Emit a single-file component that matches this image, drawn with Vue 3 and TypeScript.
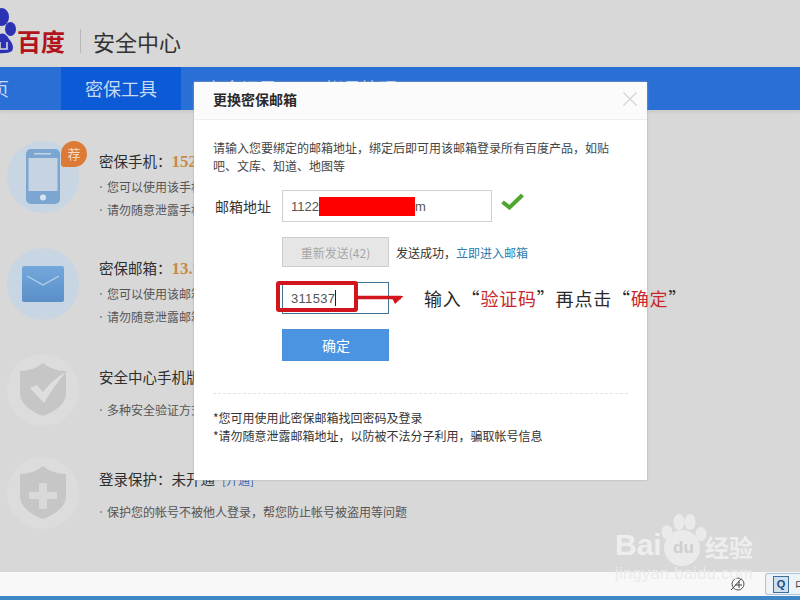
<script setup lang="ts">
// Rows on the security page, the modal lies over most of their text
interface SecurityRow {
  kind: 'phone' | 'mail' | 'check' | 'plus';
  title: string;
  value?: string;
  link?: string;
  lines: string[];
}

const rows: SecurityRow[] = [
  {
    kind: 'phone',
    title: '密保手机：',
    value: '152****8866',
    lines: ['您可以使用该手机号码登录所有百度产品', '请勿随意泄露手机号码，以防被不法分子利用'],
  },
  {
    kind: 'mail',
    title: '密保邮箱：',
    value: '13.****@qq.com',
    lines: ['您可以使用该邮箱找回密码及登录', '请勿随意泄露邮箱地址，以防被不法分子利用'],
  },
  {
    kind: 'check',
    title: '安全中心手机版',
    lines: ['多种安全验证方式，保护您的帐号安全'],
  },
  {
    kind: 'plus',
    title: '登录保护：未开通',
    link: '[开通]',
    lines: ['保护您的帐号不被他人登录，帮您防止帐号被盗用等问题'],
  },
];

const tabs: string[] = ['首页', '密保工具', '安全记录', '帐号管理'];
</script>

<template>
  <div class="page">
    <header class="top">
      <svg class="paw" width="16" height="56" viewBox="0 0 16 56">
        <ellipse cx="2" cy="17" rx="7" ry="9" fill="#2b33b4" />
        <ellipse cx="10.5" cy="29" rx="5.5" ry="7" fill="#2b33b4" />
        <path d="M-4 36 Q4 30 9 39 Q15 46 12 51 Q8 54 -4 53 Z" fill="#2b33b4" />
        <path d="M0 42 V49 H7 V42" fill="none" stroke="#d8d8d8" stroke-width="1.6" />
      </svg>
      <span class="brand">百度</span>
      <span class="brand-sep"></span>
      <span class="brand-sub">安全中心</span>
    </header>

    <nav class="nav">
      <a v-for="(tab, i) in tabs" :key="tab" class="nav-tab" :class="{ active: i === 1 }">{{ tab }}</a>
    </nav>

    <main class="list">
      <section v-for="row in rows" :key="row.kind" class="row" :class="{ single: row.lines.length === 1 }">
        <div class="icon-disc" :class="{ blue: row.kind === 'phone' || row.kind === 'mail' }">
          <svg v-if="row.kind === 'phone'" width="36" height="56" viewBox="0 0 36 56">
            <rect x="1" y="0" width="34" height="55" rx="5" fill="#7ba6d1" />
            <rect x="3.5" y="9" width="29" height="33" fill="#c6d3e2" />
            <rect x="9" y="4" width="17" height="1.5" fill="#c6d3e2" />
            <circle cx="18" cy="48.5" r="3" fill="#dbe5ef" />
          </svg>
          <svg v-else-if="row.kind === 'mail'" width="42" height="36" viewBox="0 0 42 36">
            <defs>
              <linearGradient id="mailFill" x1="0" y1="0" x2="0" y2="1">
                <stop offset="0" stop-color="#74a8dc" />
                <stop offset="1" stop-color="#5a8fc8" />
              </linearGradient>
            </defs>
            <rect width="42" height="36" rx="2" fill="url(#mailFill)" />
            <path d="M5 10 L21 19 L37 10" fill="none" stroke="#b4d0ea" stroke-width="1.4" />
          </svg>
          <svg v-else width="48" height="54" viewBox="0 0 48 54">
            <path d="M24 0 Q34 8 47 8 V32 Q45 45 24 53 Q3 45 1 32 V8 Q14 8 24 0 Z" fill="#c6c6c6" />
            <path v-if="row.kind === 'check'" d="M11 25 L18 22 L24 29 Q34 16 47 9 Q34 24 25 40 Z" fill="#dedede" />
            <path v-else d="M20 17 H28 V26 H38 V33 H28 V43 H20 V33 H10 V26 H20 Z" fill="#d9d9d9" />
          </svg>
          <span v-if="row.kind === 'phone'" class="badge">荐</span>
        </div>
        <div class="row-text">
          <div class="row-title">
            {{ row.title }}<b v-if="row.value" class="row-value">{{ row.value }}</b>
            <a v-if="row.link" class="row-link">{{ row.link }}</a>
          </div>
          <p v-for="line in row.lines" :key="line" class="row-line"><i></i>{{ line }}</p>
        </div>
      </section>
    </main>

    <footer class="status">
      <svg class="status-icon" width="16" height="16" viewBox="0 0 16 16">
        <circle cx="8" cy="8" r="6" fill="none" stroke="#555" stroke-width="1" />
        <path d="M1 14 L12 2 M5 9 H12 M9 5 V12" fill="none" stroke="#444" stroke-width="1" />
      </svg>
      <div class="status-btn">
        <span class="status-q">Q</span>
        <span>中</span>
      </div>
    </footer>
    <div class="taskbar"></div>

    <div class="modal">
      <div class="modal-head">
        <span class="modal-title">更换密保邮箱</span>
        <svg class="modal-close" width="14" height="14" viewBox="0 0 14 14">
          <path d="M0.5 0.5 L13.5 13.5 M13.5 0.5 L0.5 13.5" stroke="#d4d4d4" stroke-width="1.2" />
        </svg>
      </div>
      <div class="modal-body">
        <p class="modal-desc">请输入您要绑定的邮箱地址，绑定后即可用该邮箱登录所有百度产品，如贴吧、文库、知道、地图等</p>
        <div class="form-row first">
          <label class="form-label">邮箱地址</label>
          <div class="field wide">1122<span class="redact"></span>m</div>
          <svg class="ok" width="23" height="17" viewBox="0 0 23 17">
            <path d="M1.5 9 L8.5 14.5 L21.5 2" fill="none" stroke="#4fa52f" stroke-width="4" />
          </svg>
        </div>
        <div class="form-row resend-row">
          <button class="resend" disabled>重新发送(42)</button>
          <span class="sent">发送成功，<a class="sent-link">立即进入邮箱</a></span>
        </div>
        <div class="form-row code-row">
          <div class="field code">311537<span class="caret"></span></div>
        </div>
        <div class="form-row confirm-row">
          <button class="confirm">确定</button>
        </div>
        <div class="modal-notes">
          <p>*您可用使用此密保邮箱找回密码及登录</p>
          <p>*请勿随意泄露邮箱地址，以防被不法分子利用，骗取帐号信息</p>
        </div>
      </div>
    </div>

    <!-- red marks drawn over the screenshot -->
    <div class="mark-box"></div>
    <svg class="mark-arrow" width="48" height="20" viewBox="0 0 48 20">
      <path d="M0 9.5 H44" stroke="#d2141c" stroke-width="3.5" />
      <path d="M34 8 H46.5 L38 16 Z" fill="#d2141c" />
    </svg>
    <div class="mark-text">输入“<em>验证码</em>”再点击“<em>确定</em>”</div>

    <div class="watermark">
      <span class="wm-bai">Bai</span>
      <svg class="wm-paw" width="48" height="58" viewBox="0 0 48 58">
        <ellipse cx="7" cy="20" rx="5.5" ry="7" />
        <ellipse cx="19" cy="10" rx="5.5" ry="8" />
        <ellipse cx="30" cy="10" rx="5.5" ry="8" />
        <ellipse cx="41" cy="22" rx="5.5" ry="7" />
        <circle cx="22" cy="36" r="18" />
      </svg>
      <span class="wm-du">du</span>
      <span class="wm-jy">经验</span>
      <span class="wm-url">jingyan.baidu.com</span>
    </div>
  </div>
</template>

<style>
body {
  margin: 0;
  overflow: hidden;
}
</style>

<style scoped>
.page {
  position: relative;
  display: flex;
  flex-direction: column;
  width: 800px;
  height: 600px;
  overflow: hidden;
  background: #d8d8d8;
  color: #333;
  font-family: "Noto Sans CJK SC", "Liberation Sans", sans-serif;
}

.top {
  display: flex;
  align-items: center;
  flex: none;
  height: 67px;
}

.paw {
  flex: none;
  align-self: flex-start;
  width: 16px;
  margin-right: 1px;
}

.brand {
  width: 48px;
  margin-top: 14px;
  color: #b2141c;
  font-size: 24px;
  font-weight: 700;
  line-height: 30px;
}

.brand-sep {
  width: 1px;
  height: 24px;
  margin: 14px 12px 0 15px;
  background: #b8b8b8;
}

.brand-sub {
  margin-top: 14px;
  color: #333;
  font-size: 22px;
  line-height: 30px;
}

.nav {
  display: flex;
  flex: none;
  height: 43px;
  background: #2a6fd6;
  box-shadow: 0 2px 3px #c8c8c8;
}

.nav-tab {
  flex: none;
  box-sizing: border-box;
  width: 120px;
  color: #c6daf3;
  font-size: 18px;
  line-height: 43px;
  text-align: center;
}

.nav-tab:first-child {
  margin-left: -59px;
  padding-right: 20px;
}

.nav-tab.active {
  background: #0c5ad5;
}

.list {
  flex: 1;
  padding: 31px 0 0 7px;
}

.row {
  display: flex;
  height: 107px;
}

.row:nth-child(2) {
  height: 106px;
}

.row:nth-child(3) {
  height: 103px;
}

.row:nth-child(4) .row-text {
  padding-top: 11px;
}

.icon-disc {
  position: relative;
  display: flex;
  flex: none;
  align-items: center;
  justify-content: center;
  width: 72px;
  height: 72px;
  margin-right: 20px;
  border-radius: 50%;
  background: #dcdcdc;
}

.icon-disc.blue {
  background: #c8d5e3;
}

.badge {
  position: absolute;
  top: 0;
  right: -8px;
  width: 26px;
  height: 26px;
  border-radius: 50% 50% 50% 3px;
  background: #dd7a36;
  color: #f5dcc8;
  font-size: 13px;
  line-height: 25px;
  text-align: center;
}

.row-text {
  padding-top: 9px;
  white-space: nowrap;
}

.single .row-text {
  padding-top: 12px;
}

.row-title {
  color: #2e2e2e;
  font-size: 14.5px;
  line-height: 22px;
}

.row-value {
  color: #c78b47;
  font-family: "Liberation Serif", serif;
  font-size: 17px;
}

.row-link {
  margin-left: 7px;
  color: #3a66b0;
  font-size: 12px;
}

.row-line {
  margin: 4px 0 0;
  color: #555;
  font-size: 12px;
  line-height: 19px;
}

.single .row-line {
  margin-top: 11px;
}

.row:nth-child(3) .row-line {
  margin-top: 12px;
}

.row-line i {
  display: inline-block;
  width: 2px;
  height: 2px;
  margin: 0 5px 4px 1px;
  background: #999;
}

.status {
  display: flex;
  flex: none;
  align-items: center;
  justify-content: flex-end;
  height: 24px;
  background: #f8f8f8;
}

.status-icon {
  margin-right: 19px;
}

.status-btn {
  display: flex;
  align-items: center;
  box-sizing: border-box;
  width: 35px;
  height: 22px;
  padding-left: 7px;
  overflow: hidden;
  border: 1px solid #a9c4de;
  border-right: none;
  border-radius: 3px 0 0 3px;
  background: #eef3f8;
  color: #444;
  font-size: 12px;
  white-space: nowrap;
}

.status-q {
  flex: none;
  width: 14px;
  height: 15px;
  margin-right: 6px;
  border: 1px solid #3d6f99;
  background: #cfe0ee;
  color: #1e4d78;
  font-family: "Liberation Sans", sans-serif;
  font-size: 11px;
  font-weight: 700;
  line-height: 15px;
  text-align: center;
}

.taskbar {
  flex: none;
  height: 4px;
  background: #3f87c4;
}

.modal {
  position: absolute;
  top: 82px;
  left: 194px;
  box-sizing: border-box;
  width: 453px;
  height: 398px;
  background: #fff;
  box-shadow: 0 0 2px #aaa;
}

.modal-head {
  display: flex;
  align-items: center;
  justify-content: space-between;
  box-sizing: border-box;
  height: 38px;
  padding: 0 10px 3px 19px;
  border-bottom: 1px solid #efefef;
  background: #fbfbfb;
}

.modal-title {
  color: #2a2a2a;
  font-size: 14px;
  font-weight: 700;
}

.modal-close {
  margin-bottom: 1px;
}

.modal-body {
  padding: 19px 19px 0;
}

.modal-desc {
  width: 400px;
  margin: 0;
  color: #444;
  font-size: 12px;
  line-height: 18px;
}

.form-row {
  display: flex;
  align-items: center;
  padding-left: 69px;
}

.form-row.first {
  margin-top: 15px;
  padding-left: 2px;
}

.form-label {
  width: 67px;
  color: #333;
  font-size: 14px;
}

.field {
  display: flex;
  align-items: center;
  box-sizing: border-box;
  height: 32px;
  padding-left: 8px;
  border: 1px solid #cfcfcf;
  color: #555;
  font-family: "Liberation Sans", sans-serif;
  font-size: 13px;
}

.field.wide {
  width: 210px;
}

.redact {
  flex: none;
  width: 96px;
  height: 19px;
  background: #fe0000;
}

.ok {
  margin: -9px 0 0 9px;
}

.resend-row {
  margin-top: 15px;
}

.resend {
  width: 107px;
  height: 30px;
  padding: 0;
  border: 1px solid #cdcdcd;
  background: #e6e6e6;
  color: #a6a6a6;
  font-family: inherit;
  font-size: 12px;
}

.sent {
  margin-left: 7px;
  color: #333;
  font-size: 12px;
}

.sent-link {
  color: #2c7cb0;
}

.code-row {
  margin-top: 15px;
}

.field.code {
  width: 107px;
  border-color: #3f7596;
  letter-spacing: 0.3px;
}

.caret {
  width: 1px;
  height: 16px;
  background: #222;
}

.confirm-row {
  margin-top: 15px;
}

.confirm {
  width: 107px;
  height: 32px;
  padding: 0 0 0 1px;
  border: 1px solid #4a8fd8;
  background: #4a94e2;
  color: #fff;
  font-family: inherit;
  font-size: 14px;
}

.modal-notes {
  margin-top: 32px;
  padding-top: 15px;
  border-top: 1px dashed #e2e2e2;
  color: #333;
  font-size: 12px;
  line-height: 18px;
}

.modal-notes p {
  margin: 0;
}

.mark-box {
  position: absolute;
  top: 281px;
  left: 276px;
  box-sizing: border-box;
  width: 82px;
  height: 31px;
  border: 4px solid #d2141c;
  border-radius: 3px;
}

.mark-arrow {
  position: absolute;
  top: 288px;
  left: 357px;
}

.mark-text {
  position: absolute;
  top: 285px;
  left: 424px;
  color: #2a2a2a;
  font-size: 18px;
  line-height: 26px;
  letter-spacing: 0.8px;
  white-space: nowrap;
}

.mark-text em {
  color: #c8282d;
  font-style: normal;
}

.watermark {
  position: absolute;
  top: 510px;
  left: 610px;
  width: 190px;
  height: 90px;
  color: #eeeeee;
}

.wm-bai {
  position: absolute;
  top: 17px;
  left: 5px;
  font-family: "Liberation Sans", sans-serif;
  font-size: 30px;
  font-weight: 700;
  line-height: 36px;
}

.wm-paw {
  position: absolute;
  top: 2px;
  left: 50px;
  fill: #eaeaea;
}

.wm-du {
  position: absolute;
  top: 27px;
  left: 63px;
  color: #cfcfcf;
  font-family: "Liberation Sans", sans-serif;
  font-size: 17px;
  font-weight: 700;
  line-height: 22px;
}

.wm-jy {
  position: absolute;
  top: 21px;
  left: 95px;
  font-size: 24px;
  font-weight: 700;
  line-height: 32px;
}

.wm-url {
  position: absolute;
  top: 53px;
  left: 5px;
  color: #ebebeb;
  font-family: "Liberation Sans", sans-serif;
  font-size: 16.5px;
  line-height: 20px;
  letter-spacing: 0.3px;
}
</style>
